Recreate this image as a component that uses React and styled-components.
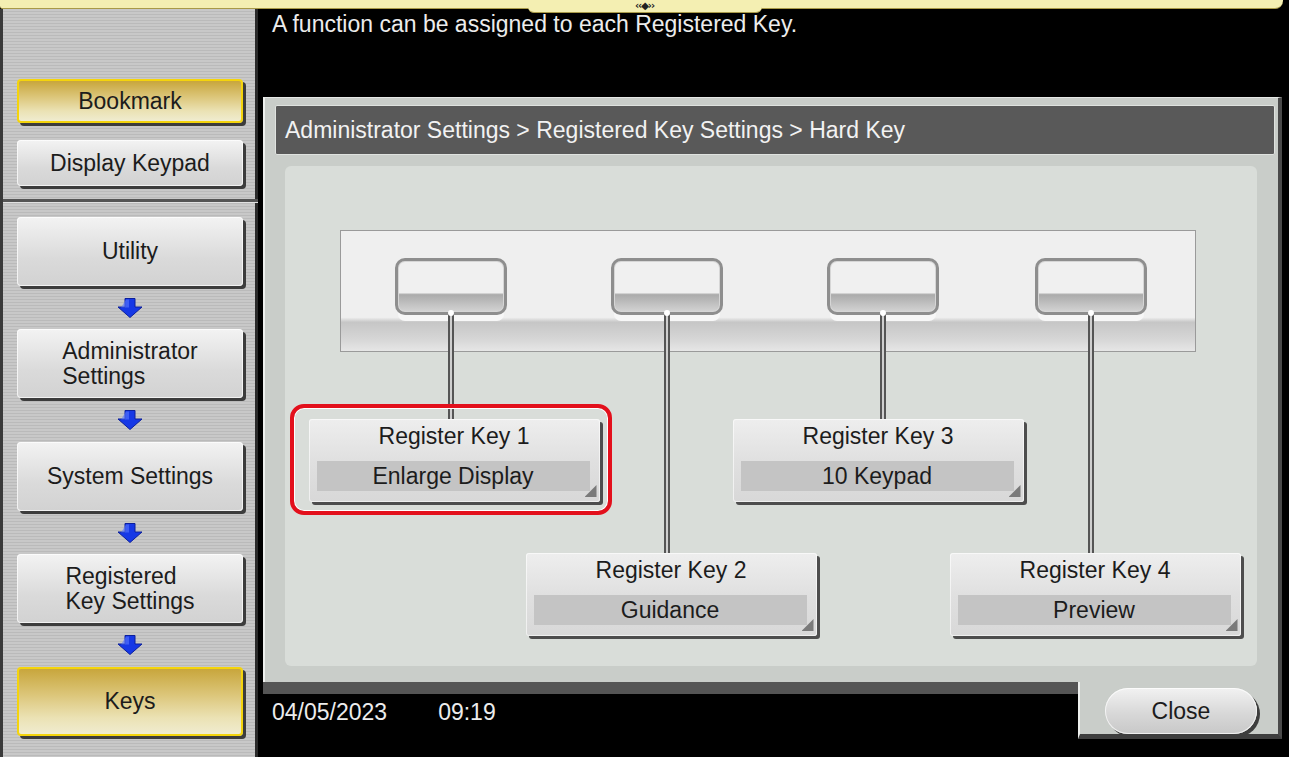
import React from 'react';
import styled, { createGlobalStyle, css } from 'styled-components';

const GlobalStyle = createGlobalStyle`
  html, body {
    margin: 0;
    padding: 0;
    background: #000;
  }
`;

const Screen = styled.div`
  width: 1289px;
  height: 757px;
  background: #000;
  display: flex;
  flex-direction: column;
  overflow: hidden;
  font-family: "Liberation Sans", Arial, sans-serif;
  font-size: 23px;
  color: #1c1c1c;
`;

const TopBar = styled.div`
  flex-shrink: 0;
  height: 8px;
  margin-right: 6px;
  background: #f4efb2;
  border-bottom: 1px solid #a89a48;
  border-radius: 0 0 8px 3px;
  display: flex;
  justify-content: center;
  position: relative;
  z-index: 2;
`;

const Handle = styled.div`
  width: 234px;
  height: 12px;
  margin-left: 6px;
  background: #f4efb2;
  border-bottom: 1px solid #a89a48;
  border-radius: 0 0 6px 6px;
  font-family: "DejaVu Sans", sans-serif;
  font-size: 10px;
  font-weight: bold;
  line-height: 12px;
  text-align: center;
  color: #222;
  letter-spacing: -1px;
`;

const Body = styled.div`
  display: flex;
  flex: 1;
  min-height: 0;
`;

const Sidebar = styled.div`
  width: 238px;
  height: 742px;
  flex-shrink: 0;
  border-left: 3px solid #3a3a3a;
  border-right: 3px solid #2a2a2a;
  padding: 70px 0 0 14px;
  display: flex;
  flex-direction: column;
  background: repeating-linear-gradient(
    to bottom,
    #c8c8c8 0px,
    #c8c8c8 2px,
    #bababa 2px,
    #bababa 3px
  );
`;

const SideButton = styled.div`
  width: 226px;
  height: ${(p) => p.$h}px;
  margin-bottom: ${(p) => p.$mb || 0}px;
  box-sizing: border-box;
  border-radius: 4px;
  display: flex;
  align-items: center;
  justify-content: center;
  background: linear-gradient(to bottom, #f3f3f3, #dadada 60%, #d2d2d2);
  box-shadow: 3px 3px 0 #3c3c3c, inset 0 0 0 1px rgba(255, 255, 255, 0.7);
  ${(p) =>
    p.$active &&
    css`
      border: 2px solid #f4d40c;
      background: linear-gradient(to bottom, #c8a63c 0%, #dcc67a 40%, #ebe2b4 75%, #f0ecd0 100%);
      box-shadow: 3px 3px 0 #3c3c3c;
    `}
`;

const Label = styled.span`
  display: inline-block;
  text-align: left;
  line-height: 25px;
  white-space: pre-line;
`;

const Divider = styled.div`
  width: 255px;
  height: 3px;
  margin: 13px 0 14px -14px;
  background: #555;
  border-bottom: 1px solid #e2e2e2;
`;

const ArrowSlot = styled.div`
  width: 226px;
  height: ${(p) => p.$h}px;
  display: flex;
  align-items: center;
  justify-content: center;
`;

const Main = styled.div`
  flex: 1;
  margin-left: 5px;
  display: flex;
  flex-direction: column;
`;

const Message = styled.div`
  height: 88px;
  flex-shrink: 0;
  padding: 2px 0 0 9px;
  box-sizing: border-box;
  color: #ececec;
  line-height: 26px;
`;

const Panel = styled.div`
  width: 1019px;
  height: 585px;
  box-sizing: border-box;
  background: #c9cdc9;
  border-left: 2px solid #eef0ee;
  border-right: 4px solid #4a4a4a;
  border-top: 1px solid #e6e8e6;
  padding: 7px 3px 16px 10px;
  display: flex;
  flex-direction: column;
`;

const Breadcrumb = styled.div`
  height: 50px;
  box-sizing: border-box;
  flex-shrink: 0;
  background: #595959;
  border: 1px solid #dfe2df;
  border-radius: 2px;
  color: #f2f2f2;
  padding-left: 9px;
  display: flex;
  align-items: center;
`;

const Workspace = styled.div`
  flex: 1;
  margin: 11px 18px 0 10px;
  background: #d9ddd9;
  border-radius: 6px;
  padding: 64px 0 0 55px;
`;

const Diagram = styled.div`
  display: grid;
  grid-template-columns: 222px 210px 222px 194px;
  align-items: start;
`;

const KeyStrip = styled.div`
  grid-row: 1;
  grid-column: 1 / -1;
  width: 856px;
  height: 122px;
  box-sizing: border-box;
  border: 1px solid #9a9a9a;
  background: linear-gradient(
    to bottom,
    #efefef 0%,
    #efefef 72%,
    #c6c6c6 76%,
    #d6d6d6 90%,
    #e6e6e6 100%
  );
`;

const KeyColumn = styled.div`
  grid-row: 1;
  grid-column: ${(p) => p.$col};
  display: flex;
  flex-direction: column;
  align-items: center;
  padding-top: 28px;
  z-index: 1;
`;

const KeyCap = styled.div`
  width: 112px;
  height: 57px;
  box-sizing: border-box;
  border: 3px solid #8e8e8e;
  border-radius: 10px;
  background: linear-gradient(to bottom, #f0f0f0 0%, #f0f0f0 62%, #ababab 66%, #d4d4d4 100%);
  box-shadow: inset 0 0 0 1px #d6d6d6, 0 9px 0 -3px #f7f7f7;
`;

const Connector = styled.div`
  position: relative;
  width: 6px;
  height: ${(p) => p.$h}px;
  margin-top: -3px;
  background: linear-gradient(
    to right,
    #555 0px,
    #555 2px,
    #cfcfcf 2px,
    #cfcfcf 4px,
    #555 4px,
    #555 6px
  );

  &::before {
    content: '';
    position: absolute;
    top: -2px;
    left: 0;
    width: 6px;
    height: 6px;
    border-radius: 50%;
    background: #fff;
  }
`;

const KeyButton = styled.div`
  position: relative;
  width: 291px;
  height: 83px;
  flex-shrink: 0;
  margin-left: ${(p) => p.$shift * 2}px;
  box-sizing: border-box;
  border-radius: 3px;
  background: linear-gradient(to bottom, #eeeeee, #e0e0e0 50%, #d8d8d8);
  box-shadow: 3px 3px 0 #4d4d4d, inset 0 0 0 1px rgba(255, 255, 255, 0.6);
  display: flex;
  flex-direction: column;

  ${(p) =>
    p.$selected &&
    css`
      &::before {
        content: '';
        position: absolute;
        top: -15px;
        left: -19px;
        right: -12px;
        bottom: -13px;
        border: 4px solid #e3101c;
        border-radius: 14px;
        box-shadow: inset 0 0 0 1px #fff;
      }
    `}

  &::after {
    content: '';
    position: absolute;
    right: 3px;
    bottom: 5px;
    width: 12px;
    height: 12px;
    background: #7a7a7a;
    clip-path: polygon(100% 0, 100% 100%, 0 100%);
  }
`;

const KeyTitle = styled.div`
  height: 34px;
  line-height: 34px;
  text-align: center;
`;

const KeyValue = styled.div`
  height: 30px;
  margin: 8px 10px 0 8px;
  background: #c4c4c4;
  line-height: 30px;
  text-align: center;
`;

const Footer = styled.div`
  flex: 1;
  width: 1019px;
  display: flex;
  align-items: flex-start;
`;

const Clock = styled.div`
  flex: 1;
  border-top: 12px solid #555;
  padding: 5px 0 0 9px;
  color: #ececec;
  line-height: 26px;
  display: flex;
  gap: 51px;
`;

const CloseTab = styled.div`
  width: 204px;
  height: 57px;
  box-sizing: border-box;
  background: #c9cdc9;
  border-left: 2px solid #eef0ee;
  border-right: 4px solid #4a4a4a;
  border-bottom: 5px solid #3e3e3e;
  padding: 6px 0 0 25px;
`;

const CloseButton = styled.div`
  width: 152px;
  height: 46px;
  box-sizing: border-box;
  border-radius: 23px;
  background: linear-gradient(to bottom, #f2f2f2, #d8d8d8 55%, #c8c8c8);
  box-shadow: 3px 3px 0 #3e3e3e, inset 0 0 0 1px rgba(255, 255, 255, 0.7);
  display: flex;
  align-items: center;
  justify-content: center;
`;

const DownArrow = () => (
  <svg width="26" height="20" viewBox="0 0 26 20">
    <path d="M8 0.5h10v8.5h7L13 19.5 1 9h7z" fill="#1638e6" stroke="#0b1f9c" strokeWidth="1" />
    <path d="M9 1.5h3v8H4z" fill="#5a78ff" opacity="0.6" />
  </svg>
);

const navItems = [
  { label: 'Utility' },
  { label: 'Administrator\nSettings' },
  { label: 'System Settings' },
  { label: 'Registered\nKey Settings' },
  { label: 'Keys', active: true },
];

const arrowHeights = [43, 44, 43, 44];

// shift = how far the button sits off its key's centre line
const registerKeys = [
  { n: 1, value: 'Enlarge Display', drop: 107, shift: 3, selected: true },
  { n: 2, value: 'Guidance', drop: 241, shift: 4 },
  { n: 3, value: '10 Keypad', drop: 107, shift: -5 },
  { n: 4, value: 'Preview', drop: 241, shift: 4 },
];

const App = () => {
  return (
    <>
      <GlobalStyle />
      <Screen>
        <TopBar>
          <Handle>‹‹◆››</Handle>
        </TopBar>
        <Body>
          <Sidebar>
            <SideButton $h={44} $mb={17} $active>
              <Label>Bookmark</Label>
            </SideButton>
            <SideButton $h={46}>
              <Label>Display Keypad</Label>
            </SideButton>
            <Divider />
            {navItems.map((item, i) => (
              <React.Fragment key={item.label}>
                <SideButton $h={69} $active={item.active}>
                  <Label>{item.label}</Label>
                </SideButton>
                {i < navItems.length - 1 && (
                  <ArrowSlot $h={arrowHeights[i]}>
                    <DownArrow />
                  </ArrowSlot>
                )}
              </React.Fragment>
            ))}
          </Sidebar>

          <Main>
            <Message>A function can be assigned to each Registered Key.</Message>
            <Panel>
              <Breadcrumb>Administrator Settings &gt; Registered Key Settings &gt; Hard Key</Breadcrumb>
              <Workspace>
                <Diagram>
                  <KeyStrip />
                  {registerKeys.map((k) => (
                    <KeyColumn key={k.n} $col={k.n}>
                      <KeyCap />
                      <Connector $h={k.drop} />
                      <KeyButton $selected={k.selected} $shift={k.shift}>
                        <KeyTitle>Register Key {k.n}</KeyTitle>
                        <KeyValue>{k.value}</KeyValue>
                      </KeyButton>
                    </KeyColumn>
                  ))}
                </Diagram>
              </Workspace>
            </Panel>
            <Footer>
              <Clock>
                <span>04/05/2023</span>
                <span>09:19</span>
              </Clock>
              <CloseTab>
                <CloseButton>Close</CloseButton>
              </CloseTab>
            </Footer>
          </Main>
        </Body>
      </Screen>
    </>
  );
};

export default App;
